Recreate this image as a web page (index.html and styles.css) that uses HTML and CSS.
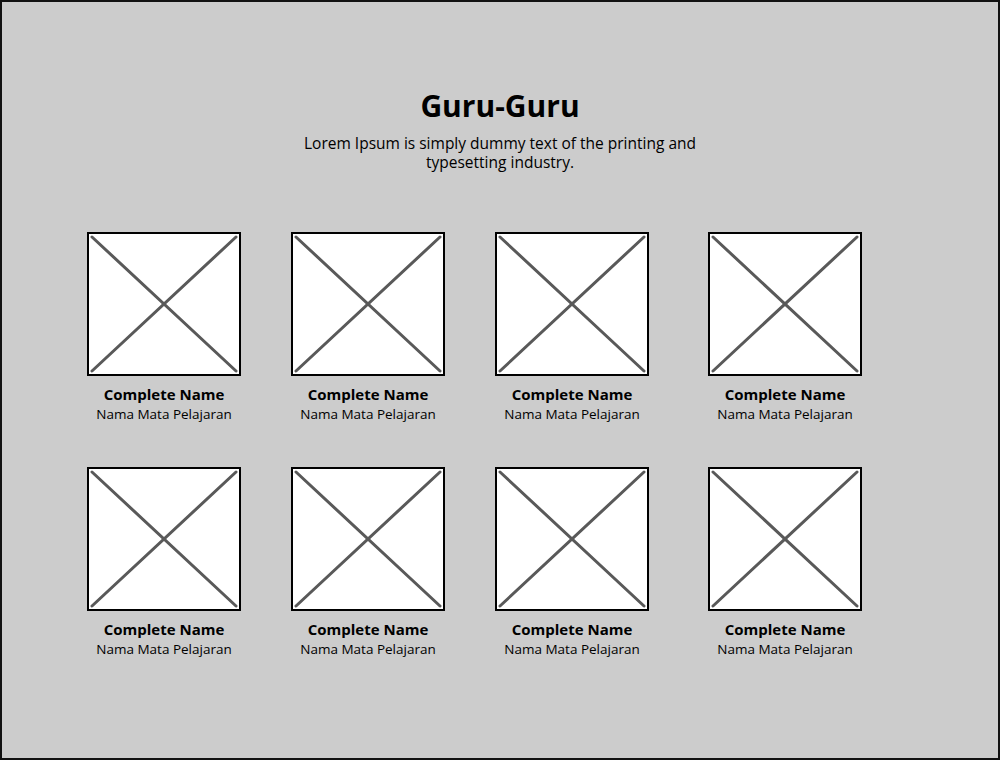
FILE: index.html
```html
<!DOCTYPE html>
<html>
<head>
<meta charset="utf-8">
<link rel="stylesheet" href="styles.css">
</head>
<body>
<div class="frame">
  <header class="head">
    <h1 class="title">Guru-Guru</h1>
    <p class="lead">Lorem Ipsum is simply dummy text of the printing and typesetting industry.</p>
  </header>
  <div class="grid">
    <div class="card"><div class="pic"><svg viewBox="0 0 150 140" preserveAspectRatio="none"><line x1="3" y1="3" x2="147" y2="137"/><line x1="147" y1="3" x2="3" y2="137"/></svg></div><div class="name">Complete Name</div><div class="subj">Nama Mata Pelajaran</div></div>
    <div class="card"><div class="pic"><svg viewBox="0 0 150 140" preserveAspectRatio="none"><line x1="3" y1="3" x2="147" y2="137"/><line x1="147" y1="3" x2="3" y2="137"/></svg></div><div class="name">Complete Name</div><div class="subj">Nama Mata Pelajaran</div></div>
    <div class="card"><div class="pic"><svg viewBox="0 0 150 140" preserveAspectRatio="none"><line x1="3" y1="3" x2="147" y2="137"/><line x1="147" y1="3" x2="3" y2="137"/></svg></div><div class="name">Complete Name</div><div class="subj">Nama Mata Pelajaran</div></div>
    <div class="card"><div class="pic"><svg viewBox="0 0 150 140" preserveAspectRatio="none"><line x1="3" y1="3" x2="147" y2="137"/><line x1="147" y1="3" x2="3" y2="137"/></svg></div><div class="name">Complete Name</div><div class="subj">Nama Mata Pelajaran</div></div>
    <div class="card"><div class="pic"><svg viewBox="0 0 150 140" preserveAspectRatio="none"><line x1="3" y1="3" x2="147" y2="137"/><line x1="147" y1="3" x2="3" y2="137"/></svg></div><div class="name">Complete Name</div><div class="subj">Nama Mata Pelajaran</div></div>
    <div class="card"><div class="pic"><svg viewBox="0 0 150 140" preserveAspectRatio="none"><line x1="3" y1="3" x2="147" y2="137"/><line x1="147" y1="3" x2="3" y2="137"/></svg></div><div class="name">Complete Name</div><div class="subj">Nama Mata Pelajaran</div></div>
    <div class="card"><div class="pic"><svg viewBox="0 0 150 140" preserveAspectRatio="none"><line x1="3" y1="3" x2="147" y2="137"/><line x1="147" y1="3" x2="3" y2="137"/></svg></div><div class="name">Complete Name</div><div class="subj">Nama Mata Pelajaran</div></div>
    <div class="card"><div class="pic"><svg viewBox="0 0 150 140" preserveAspectRatio="none"><line x1="3" y1="3" x2="147" y2="137"/><line x1="147" y1="3" x2="3" y2="137"/></svg></div><div class="name">Complete Name</div><div class="subj">Nama Mata Pelajaran</div></div>
  </div>
</div>
</body>
</html>
```

FILE: styles.css
```css
* { box-sizing: border-box; }
html, body { margin: 0; padding: 0; }
body {
  width: 1000px;
  height: 760px;
  font-family: "Open Sans", "Noto Sans", sans-serif;
  color: #000;
  background: #fff;
}
.frame {
  width: 1000px;
  height: 760px;
  background: #cccccc;
  border: 2px solid #111;
  padding-top: 86px;
}
.head {
  text-align: center;
}
.title {
  margin: 0;
  font-size: 30px;
  line-height: 36px;
  font-weight: 700;
}
.lead {
  margin: 10px auto 0;
  width: 420px;
  font-size: 15.5px;
  line-height: 19px;
}
.grid {
  margin: 60px 0 0 85px;
  display: grid;
  grid-template-columns: 204px 204px 213px 154px;
  grid-auto-rows: 235px;
}
.card {
  width: 154px;
  text-align: center;
}
.pic {
  width: 154px;
  height: 144px;
  background: #fff;
  border: 2px solid #000;
}
.pic svg {
  display: block;
  width: 100%;
  height: 100%;
}
.pic line {
  stroke: #595959;
  stroke-width: 3;
  stroke-linecap: round;
}
.name {
  margin: 8px -20px 0;
  font-size: 15px;
  font-weight: 700;
  line-height: 20px;
}
.subj {
  margin: 1px -20px 0;
  font-size: 13.5px;
  line-height: 19px;
}
```
